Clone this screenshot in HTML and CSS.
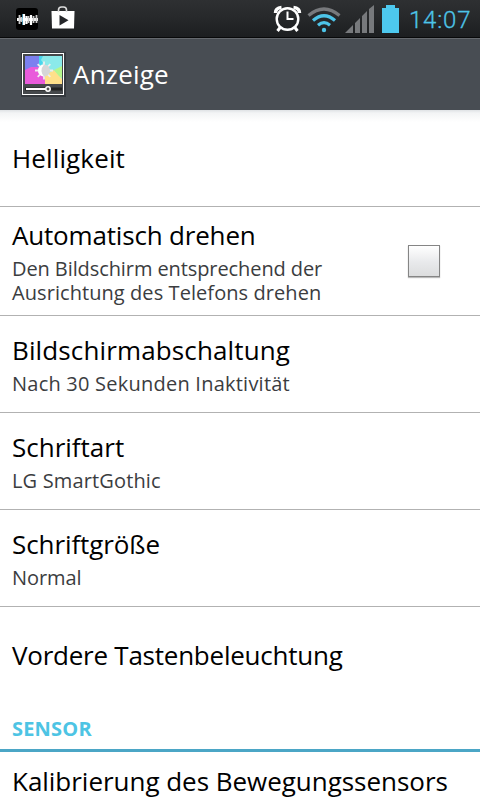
FILE: index.html
```html
<!DOCTYPE html>
<html lang="de">
<head>
<meta charset="utf-8">
<title>Anzeige</title>
<link rel="stylesheet" href="styles.css">
</head>
<body>
<header class="status">
  <svg class="status-left" width="100" height="38" viewBox="0 0 100 38">
    <rect x="16" y="8" width="22" height="22" rx="3" fill="#000"/>
    <path d="M17 19.500h21" stroke="#fff" stroke-width="3"/>
    <path d="M19.500 15v9M21.500 17v5M28.500 16v7M33.500 16v7M36.500 15v8" stroke="#ccc" stroke-width="1.800"/>
    <path d="M24 14v11M26.500 16v8M31 15v10" stroke="#fff" stroke-width="2.200"/>
    <path d="M22.500 14v11" stroke="#54b9de" stroke-width=".7"/>
    <path d="M51.500 11h23l-.5 17.500H52z" fill="#fff"/>
    <path d="M58.500 12v-2q0-3 3-3h2q3 0 3 3v2" fill="none" stroke="#ddd" stroke-width="1.600"/>
    <path d="M59.500 15v10.500l9-5.300z" fill="#24262a"/>
  </svg>
  <svg class="status-right" width="136" height="38" viewBox="270 0 136 38">
    <g fill="none" stroke="#fff">
      <circle cx="287.500" cy="19" r="10.800" stroke-width="2.400"/>
      <path d="M287.500 11.500v7.500h6" stroke-width="2"/>
      <path d="M280.500 27l-3 4M294.500 27l3 4" stroke-width="3"/>
      <path d="M275.500 13q0-5 6-5.500M299.500 13q0-5-6-5.500" stroke-width="3.500"/>
    </g>
    <g fill="none" stroke-width="3.200">
      <path d="M308.500 15.500q15.500-13 31 0" stroke="#77797c"/>
      <path d="M313 20.500q11-9.500 22 0M318 25.200q6-5 12 0" stroke="#4dc4e8"/>
    </g>
    <circle cx="324" cy="30" r="2.200" fill="#4dc4e8"/>
    <path d="M345 33l8-8v8zM355 23l5-5v15h-5zM362 16l5-5v22h-5zM369 9l5-4v28h-5z" fill="#77797c"/>
    <path d="M386 5h9v3h4v25h-17V8h4z" fill="#4dc8ee"/>
  </svg>
  <span class="clock">14:07</span>
</header>
<div class="appbar">
  <svg class="app-icon" width="46" height="46" viewBox="0 0 46 46">
    <rect x="0" y="0" width="45" height="45" fill="#35393e"/>
    <rect x="1.500" y="1.500" width="41" height="41" fill="#45484b" stroke="#fff"/>
    <path d="M4 4h37v28H4z" fill="#8beaea"/>
    <path d="M4 4h14v14H4z" fill="#7b80ef"/>
    <path d="M18 4h4l-2 4 2 3-4 4z" fill="#49d5ed"/>
    <path d="M4 18l6-3h8l6 5v12H4z" fill="#e95bdb"/>
    <path d="M24 23l9-5 8 9v5H24z" fill="#ffe08a"/>
    <path d="M33 18l8-4v12l-3-2z" fill="#b4f78c"/>
    <path d="M23 9.500v18M14 18.500h18M16.700 12.200l12.600 12.600M29.300 12.200L16.700 24.800" stroke="#eee" stroke-width="1.800"/>
    <circle cx="23" cy="18.500" r="6" fill="#d6d6d8"/>
    <path d="M23 12.500a6 6 0 0 0 0 12q-5-6 0-12" fill="#fff"/>
    <path d="M4 37h37" stroke="#222" stroke-width="3"/>
    <path d="M5 37h22" stroke="#fff" stroke-width="2"/>
    <circle cx="27" cy="37" r="2.200" fill="#555" stroke="#fff" stroke-width="1.500"/>
  </svg>
  <h1>Anzeige</h1>
</div>
<main>
  <section class="row"><h2 class="loose">Helligkeit</h2></section>
  <section class="row tall">
    <div><h2 class="tight">Automatisch drehen</h2><p><span class="snug">Den Bildschirm entsprechend der</span><br><span class="airy">Ausrichtung des Telefons drehen</span></p></div>
    <span class="check" role="checkbox" aria-checked="false"></span>
  </section>
  <section class="row"><div><h2 class="loose">Bildschirmabschaltung</h2><p class="wide">Nach 30 Sekunden Inaktivität</p></div></section>
  <section class="row"><div><h2>Schriftart</h2><p class="medium">LG SmartGothic</p></div></section>
  <section class="row"><div><h2 class="snug">Schriftgröße</h2><p class="snug">Normal</p></div></section>
  <section class="row last"><h2 class="tighter">Vordere Tastenbeleuchtung</h2></section>
  <h3>SENSOR</h3>
  <section class="row cut"><h2>Kalibrierung des Bewegungssensors</h2></section>
</main>
</body>
</html>
```
FILE: styles.css
```css
* { box-sizing: border-box; }
body {
  margin: 0;
  height: 800px;
  overflow: hidden;
  background: #fff;
  color: #000;
  font-family: "Open Sans", sans-serif;
}
h1, h2, h3, p { margin: 0; font-weight: 400; white-space: nowrap; }
.status {
  display: flex;
  height: 38px;
  background: linear-gradient(#2e3032, #27292b 45%, #1c1e20);
  border-bottom: 1px solid #08090a;
}
.status-right { margin-left: 170px; flex: none; }
.status-left { flex: none; }
.clock {
  margin-left: 3px;
  color: #4dc4e8;
  font: 300 24px/40px Roboto, sans-serif;
  letter-spacing: .8px;
  -webkit-text-stroke: .3px #4dc4e8;
}
.appbar {
  display: flex;
  align-items: center;
  height: 72px;
  padding-left: 21px;
  background: #484d53;
  border-top: 1px solid #65696e;
}
.app-icon { flex: none; }
h1 { margin: -2px 0 0 6px; color: #fff; font-size: 26px; line-height: 36px; letter-spacing: .2px; }
main { background: linear-gradient(#dfe2e5, #f3f4f5 3px, #fff 12px); }
.row {
  display: flex;
  align-items: center;
  justify-content: space-between;
  height: 97px;
  padding: 0 40px 0 12px;
  border-bottom: 1px solid #b2b2b2;
}
.row.tall { height: 109px; }
.row.last { border-bottom: 0; height: 96px; margin-bottom: 1px; }
h2 { font-size: 26px; line-height: 32px; }
p { margin: 6px 0 -1px; font-size: 20px; line-height: 24px; color: #3b3d3f; }
.loose { letter-spacing: .13px; }
.tight { letter-spacing: -.18px; }
.tighter { letter-spacing: -.24px; }
.snug { letter-spacing: -.09px; }
.airy { letter-spacing: .07px; }
.medium { letter-spacing: .15px; }
.wide { letter-spacing: .23px; }
.check {
  width: 32px;
  height: 32px;
  border: 1px solid #858585;
  background: linear-gradient(#fff, #e8e9eb 55%, #dcddde);
  box-shadow: 0 1px 1px #bbb;
}
h3 {
  height: 48px;
  padding: 13px 12px 0;
  border-bottom: 3px solid #4ba6c6;
  color: #4dc4e4;
  font-size: 20px;
  font-weight: 700;
  line-height: 24px;
  letter-spacing: .2px;
}
.row.cut { align-items: flex-start; height: 48px; padding-top: 13px; border: 0; }
.row.cut h2 { letter-spacing: -.03px; }
```
